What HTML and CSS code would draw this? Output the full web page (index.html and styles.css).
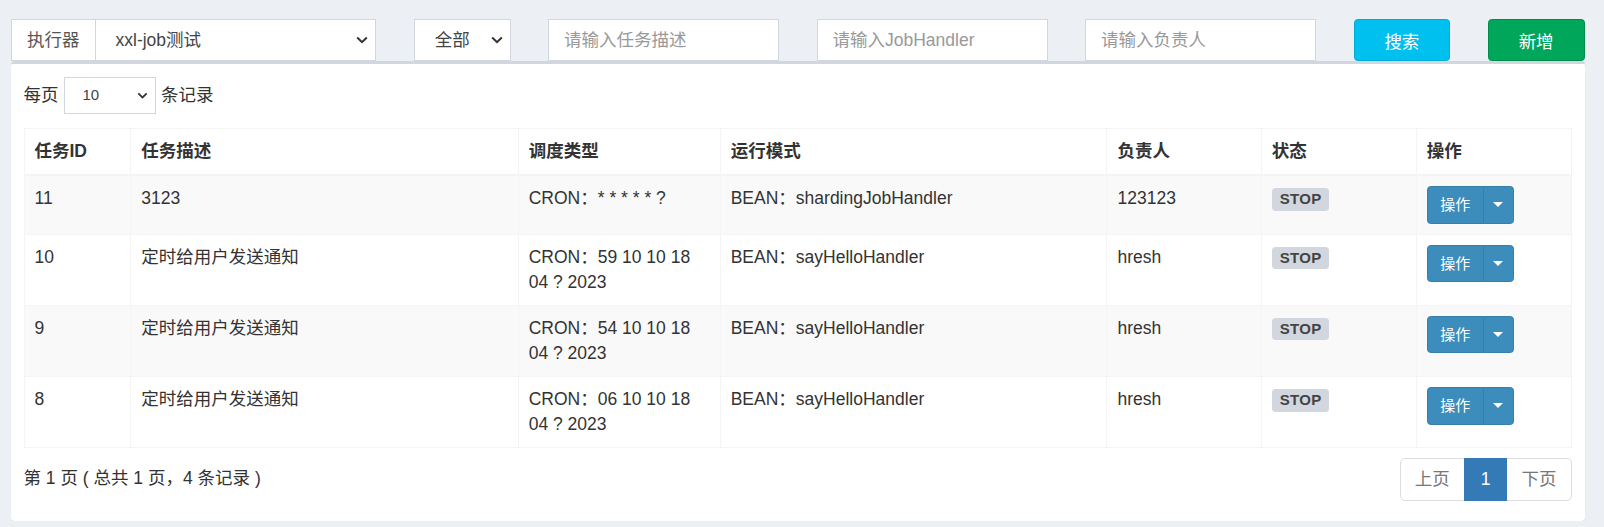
FILE: index.html
```html
<!DOCTYPE html>
<html lang="zh-CN">
<head>
<meta charset="utf-8">
<title>任务管理</title>
<link rel="stylesheet" href="styles.css">
</head>
<body>
<div class="page">
  <div class="filters">
    <div class="group span3">
      <span class="addon">执行器</span>
      <select class="ctrl sel grow"><option>xxl-job测试</option></select>
    </div>
    <select class="ctrl sel span1"><option>全部</option></select>
    <input class="ctrl span2" type="text" placeholder="请输入任务描述">
    <input class="ctrl span2" type="text" placeholder="请输入JobHandler">
    <input class="ctrl span2" type="text" placeholder="请输入负责人">
    <button class="btn btn-info span1">搜索</button>
    <button class="btn btn-success span1">新增</button>
  </div>

  <div class="box">
    <div class="length">
      <span>每页</span>
      <select class="ctrl sel ctrl-sm"><option>10</option></select>
      <span>条记录</span>
    </div>

    <table class="grid">
      <colgroup>
        <col class="c-id"><col class="c-desc"><col class="c-type"><col class="c-mode"><col class="c-author"><col class="c-status"><col class="c-op">
      </colgroup>
      <thead>
        <tr><th>任务ID</th><th>任务描述</th><th>调度类型</th><th>运行模式</th><th>负责人</th><th>状态</th><th>操作</th></tr>
      </thead>
      <tbody>
        <tr>
          <td>11</td><td>3123</td><td>CRON：* * * * * ?</td><td>BEAN：shardingJobHandler</td><td>123123</td>
          <td><span class="label">STOP</span></td>
          <td><div class="btn-group"><span class="bsm bsm-main">操作</span><span class="bsm bsm-caret"><span class="caret"></span></span></div></td>
        </tr>
        <tr>
          <td>10</td><td>定时给用户发送通知</td><td>CRON：59 10 10 18 04 ? 2023</td><td>BEAN：sayHelloHandler</td><td>hresh</td>
          <td><span class="label">STOP</span></td>
          <td><div class="btn-group"><span class="bsm bsm-main">操作</span><span class="bsm bsm-caret"><span class="caret"></span></span></div></td>
        </tr>
        <tr>
          <td>9</td><td>定时给用户发送通知</td><td>CRON：54 10 10 18 04 ? 2023</td><td>BEAN：sayHelloHandler</td><td>hresh</td>
          <td><span class="label">STOP</span></td>
          <td><div class="btn-group"><span class="bsm bsm-main">操作</span><span class="bsm bsm-caret"><span class="caret"></span></span></div></td>
        </tr>
        <tr>
          <td>8</td><td>定时给用户发送通知</td><td>CRON：06 10 10 18 04 ? 2023</td><td>BEAN：sayHelloHandler</td><td>hresh</td>
          <td><span class="label">STOP</span></td>
          <td><div class="btn-group"><span class="bsm bsm-main">操作</span><span class="bsm bsm-caret"><span class="caret"></span></span></div></td>
        </tr>
      </tbody>
    </table>

    <div class="footer">
      <div class="info">第 1 页 ( 总共 1 页，4 条记录 )</div>
      <ul class="pagination">
        <li class="pg pg-prev">上页</li>
        <li class="pg pg-num active">1</li>
        <li class="pg pg-next">下页</li>
      </ul>
    </div>
  </div>
</div>
</body>
</html>
```

FILE: styles.css
```css
* { box-sizing: border-box; }

html, body { margin: 0; padding: 0; }

body {
  background: #ecf0f5;
  font-family: "Liberation Sans", "Noto Sans CJK SC", sans-serif;
  font-size: 17.5px;
  line-height: 25px;
  color: #333;
}

.page {
  width: 1573.5px;
  margin-left: 11px;
  padding-top: 19px;
}

/* ---------- filter row ---------- */
.filters {
  display: grid;
  grid-template-columns: repeat(12, 1fr);
  column-gap: 37.5px;
  height: 42px;
}
.span1 { grid-column: span 1; }
.span2 { grid-column: span 2; }
.span3 { grid-column: span 3; }

.group { display: flex; height: 42px; }
.addon {
  display: flex;
  align-items: center;
  padding: 0 15px;
  border: 1px solid #d2d6de;
  border-right: 0;
  background: #fff;
  color: #555;
  white-space: nowrap;
}
.grow { flex: 1; min-width: 0; }

.ctrl {
  height: 42px;
  margin: 0;
  padding: 7.5px 15px;
  border: 1px solid #d2d6de;
  border-radius: 0;
  background-color: #fff;
  font-family: "Liberation Sans", "Noto Sans CJK SC", sans-serif;
  font-size: 17.5px;
  line-height: 25px;
  color: #444;
  outline: none;
}
.ctrl::placeholder { color: #999; }

.sel {
  appearance: none;
  -webkit-appearance: none;
  padding-left: 20px;
  padding-right: 30px;
  background-image: url("data:image/svg+xml,%3Csvg xmlns='http://www.w3.org/2000/svg' width='12' height='8' viewBox='0 0 12 8'%3E%3Cpolyline points='1.2,1.5 6,6.2 10.8,1.5' fill='none' stroke='%23333' stroke-width='2'/%3E%3C/svg%3E");
  background-repeat: no-repeat;
  background-position: right 7px center;
  background-size: 12px 8px;
}

.btn {
  height: 42px;
  margin: 0;
  padding: 0;
  border-radius: 3.75px;
  font-family: "Liberation Sans", "Noto Sans CJK SC", sans-serif;
  font-size: 17.5px;
  color: #fff;
  cursor: pointer;
}
.btn-info { background: #00c0ef; border: 1px solid #00acd6; }
.btn-success { background: #00a65a; border: 1px solid #008d4c; }

/* ---------- box ---------- */
.box {
  background: #fff;
  border-top: 3.75px solid #d2d6de;
  border-radius: 3.75px;
  box-shadow: 0 1px 1px rgba(0, 0, 0, 0.1);
  padding: 12.5px 12.5px 17.5px;
}

.length {
  display: flex;
  align-items: center;
  gap: 5px;
  height: 37.5px;
}
.ctrl-sm {
  width: 92.5px;
  height: 37.5px;
  padding: 5px 24px 5px 18px;
  font-size: 15px;
  line-height: 22px;
  background-position: right 7px center;
  background-size: 11px 7px;
}

/* ---------- table ---------- */
.grid {
  width: 100%;
  margin: 14px 0 7.5px;
  border-collapse: collapse;
  table-layout: fixed;
}
.c-id { width: 106.7px; }
.c-desc { width: 387.5px; }
.c-type { width: 202px; }
.c-mode { width: 386.8px; }
.c-author { width: 154.2px; }
.c-status { width: 155px; }
.c-op { width: 155.8px; }

.grid th, .grid td {
  border: 1px solid #f4f4f4;
  padding: 10px;
  text-align: left;
  vertical-align: top;
}
.grid th {
  font-weight: bold;
  border-bottom: 2.5px solid #f4f4f4;
}
.grid td { padding-bottom: 10.2px; }
.grid tbody tr:nth-child(odd) { background: #f9f9f9; }

.label {
  display: inline-block;
  margin-top: 2px;
  padding: 3px 8px 4.5px;
  background: #d2d6de;
  color: #444;
  border-radius: 3.75px;
  font-size: 15px;
  font-weight: bold;
  line-height: 15px;
  letter-spacing: 0.3px;
}

.btn-group { display: inline-flex; }
.bsm {
  display: flex;
  align-items: center;
  justify-content: center;
  height: 37.5px;
  background: #3c8dbc;
  border: 1px solid #367fa9;
  color: #fff;
  font-size: 15px;
}
.bsm-main {
  width: 57px;
  border-radius: 3.75px 0 0 3.75px;
}
.bsm-caret {
  width: 31px;
  margin-left: -1px;
  border-radius: 0 3.75px 3.75px 0;
}
.caret {
  width: 0;
  height: 0;
  border-top: 5px solid #fff;
  border-left: 5px solid transparent;
  border-right: 5px solid transparent;
}

/* ---------- footer ---------- */
.footer {
  display: flex;
  justify-content: space-between;
  align-items: flex-start;
}
.info { padding-top: 10px; }

.pagination {
  display: flex;
  margin: 2.5px 0;
  padding: 0;
  list-style: none;
}
.pg {
  display: flex;
  align-items: center;
  justify-content: center;
  height: 42.5px;
  border: 1px solid #ddd;
  background: #fff;
  color: #777;
  margin-left: -1px;
}
.pg-prev { width: 65.5px; margin-left: 0; border-radius: 5px 0 0 5px; }
.pg-num { width: 43px; }
.pg-next { width: 66px; border-radius: 0 5px 5px 0; }
.pg.active {
  background: #337ab7;
  border-color: #337ab7;
  color: #fff;
  position: relative;
}
```
